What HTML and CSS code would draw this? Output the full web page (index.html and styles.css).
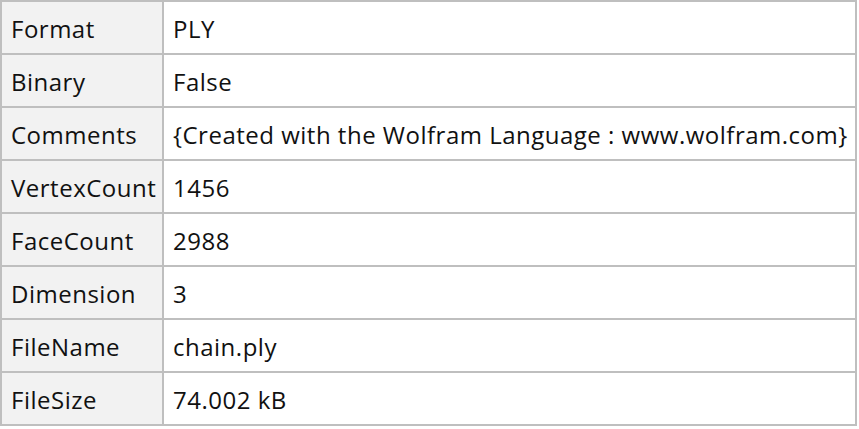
FILE: index.html
```html
<!DOCTYPE html>
<html lang="en">
<head>
  <meta charset="UTF-8" />
  <title>chain.ply</title>
  <link rel="stylesheet" href="styles.css">
</head>
<body>

<table class="info">
  <colgroup>
    <col class="key-col">
    <col>
  </colgroup>
  <tr><th>Format</th><td>PLY</td></tr>
  <tr><th>Binary</th><td>False</td></tr>
  <tr><th>Comments</th><td>{Created with the Wolfram Language : www.wolfram.com}</td></tr>
  <tr><th>VertexCount</th><td>1456</td></tr>
  <tr><th>FaceCount</th><td>2988</td></tr>
  <tr><th>Dimension</th><td>3</td></tr>
  <tr><th>FileName</th><td>chain.ply</td></tr>
  <tr><th>FileSize</th><td>74.002 kB</td></tr>
</table>

</body>
</html>
```

FILE: styles.css
```css
* {
  box-sizing: border-box;
}

html, body {
  margin: 0;
  padding: 0;
  background: #ffffff;
}

.info {
  border-collapse: collapse;
  table-layout: fixed;
  width: 857px;
  font-family: 'Open Sans', 'Noto Sans', sans-serif;
  font-size: 24px;
  letter-spacing: 0.5px;
  color: #111111;
  border: 2px solid #bfbfbf;
}

.key-col {
  width: 162px;
}

.info th,
.info td {
  height: 53px;
  padding: 2px 0 0 9px;
  border: 2px solid #bfbfbf;
  text-align: left;
  font-weight: normal;
  white-space: nowrap;
  vertical-align: middle;
}

.info th {
  background: #f2f2f2;
}

.info td {
  background: #ffffff;
}
```
